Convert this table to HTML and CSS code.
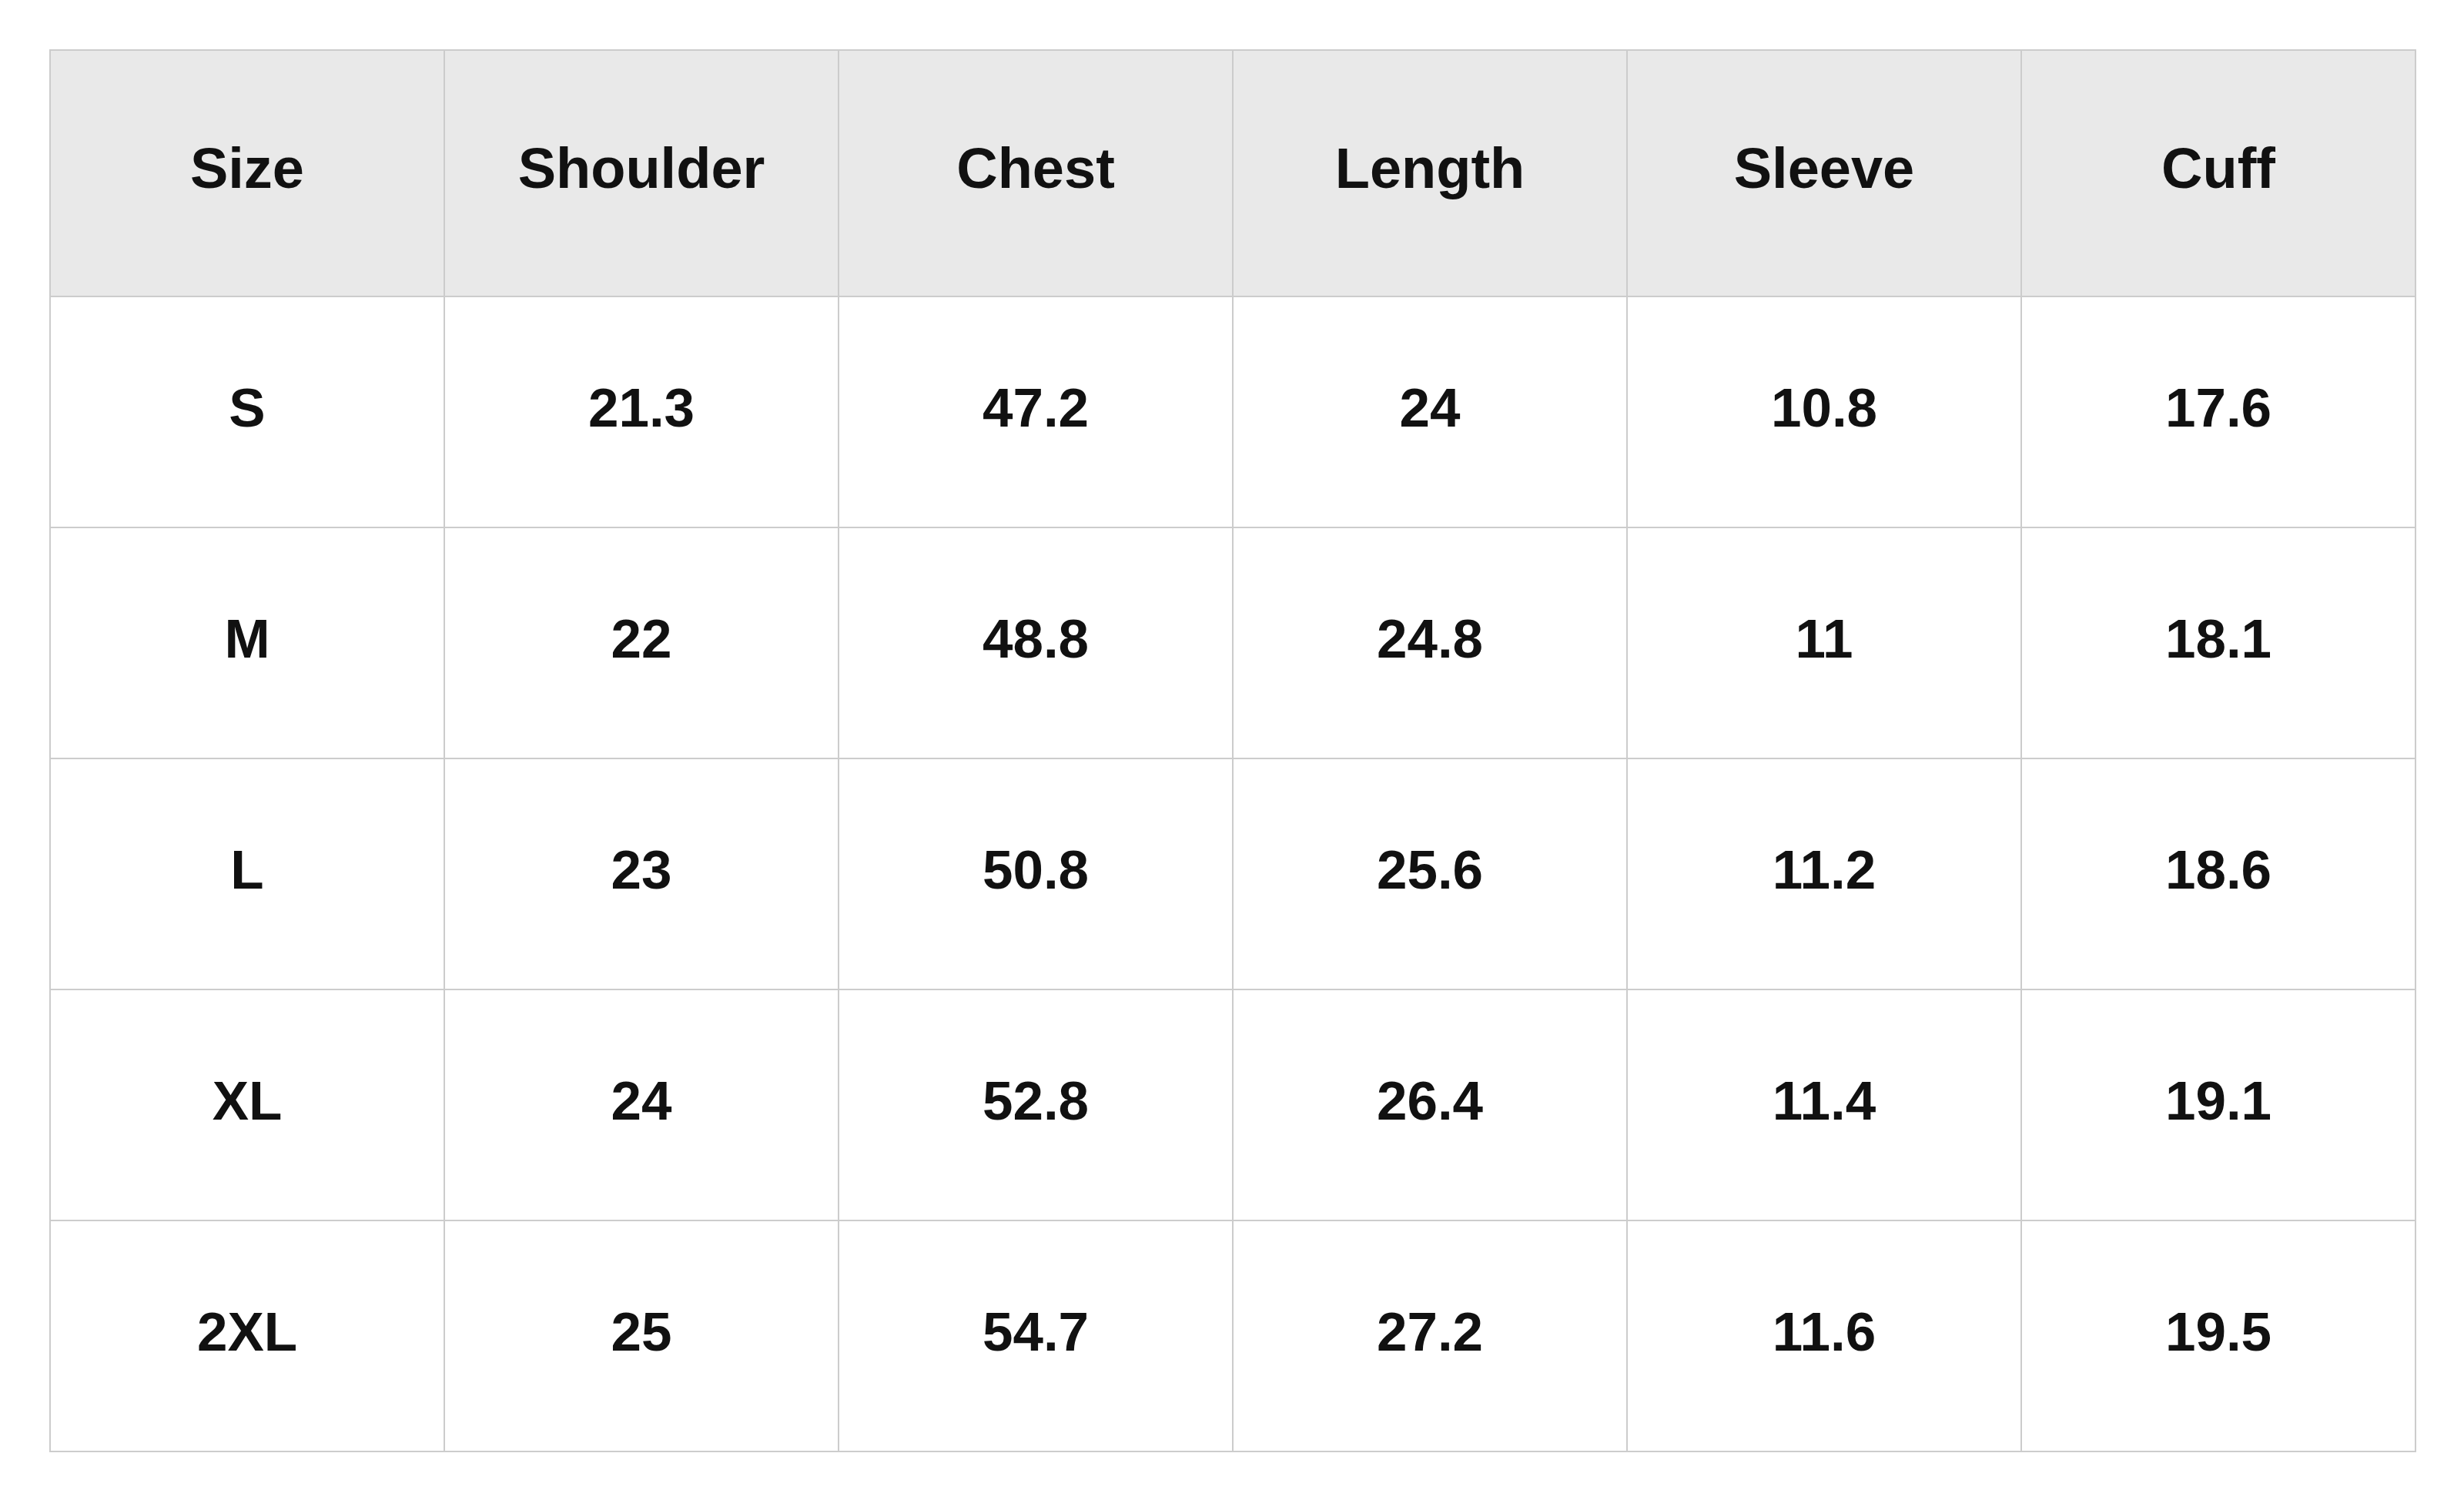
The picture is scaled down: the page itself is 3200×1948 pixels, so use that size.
FILE: index.html
```html
<!DOCTYPE html>
<html lang="en">
<head>
<meta charset="utf-8">
<title>Size Chart</title>
<link rel="stylesheet" href="styles.css">
</head>
<body>
<div class="page">
<table class="size-table">
<thead>
<tr><th>Size</th><th>Shoulder</th><th>Chest</th><th>Length</th><th>Sleeve</th><th>Cuff</th></tr>
</thead>
<tbody>
<tr><td>S</td><td>21.3</td><td>47.2</td><td>24</td><td>10.8</td><td>17.6</td></tr>
<tr><td>M</td><td>22</td><td>48.8</td><td>24.8</td><td>11</td><td>18.1</td></tr>
<tr><td>L</td><td>23</td><td>50.8</td><td>25.6</td><td>11.2</td><td>18.6</td></tr>
<tr><td>XL</td><td>24</td><td>52.8</td><td>26.4</td><td>11.4</td><td>19.1</td></tr>
<tr><td>2XL</td><td>25</td><td>54.7</td><td>27.2</td><td>11.6</td><td>19.5</td></tr>
</tbody>
</table>
</div>
</body>
</html>
```
FILE: styles.css
```css
html, body {
  margin: 0;
  padding: 0;
  background: #ffffff;
}
.page {
  padding: 64px 63px 62px 64px;
}
.size-table {
  border-collapse: collapse;
  table-layout: fixed;
  width: 3074px;
  font-family: "Liberation Sans", Arial, sans-serif;
  font-weight: 700;
  color: #111111;
}
.size-table th,
.size-table td {
  border: 2px solid #cccccc;
  text-align: center;
  vertical-align: middle;
  padding: 0 0 12px 0;
  line-height: 1;
}
.size-table th {
  background: #e9e9e9;
  height: 306px;
  font-size: 74px;
}
.size-table td {
  height: 286px;
  font-size: 71px;
}
```
